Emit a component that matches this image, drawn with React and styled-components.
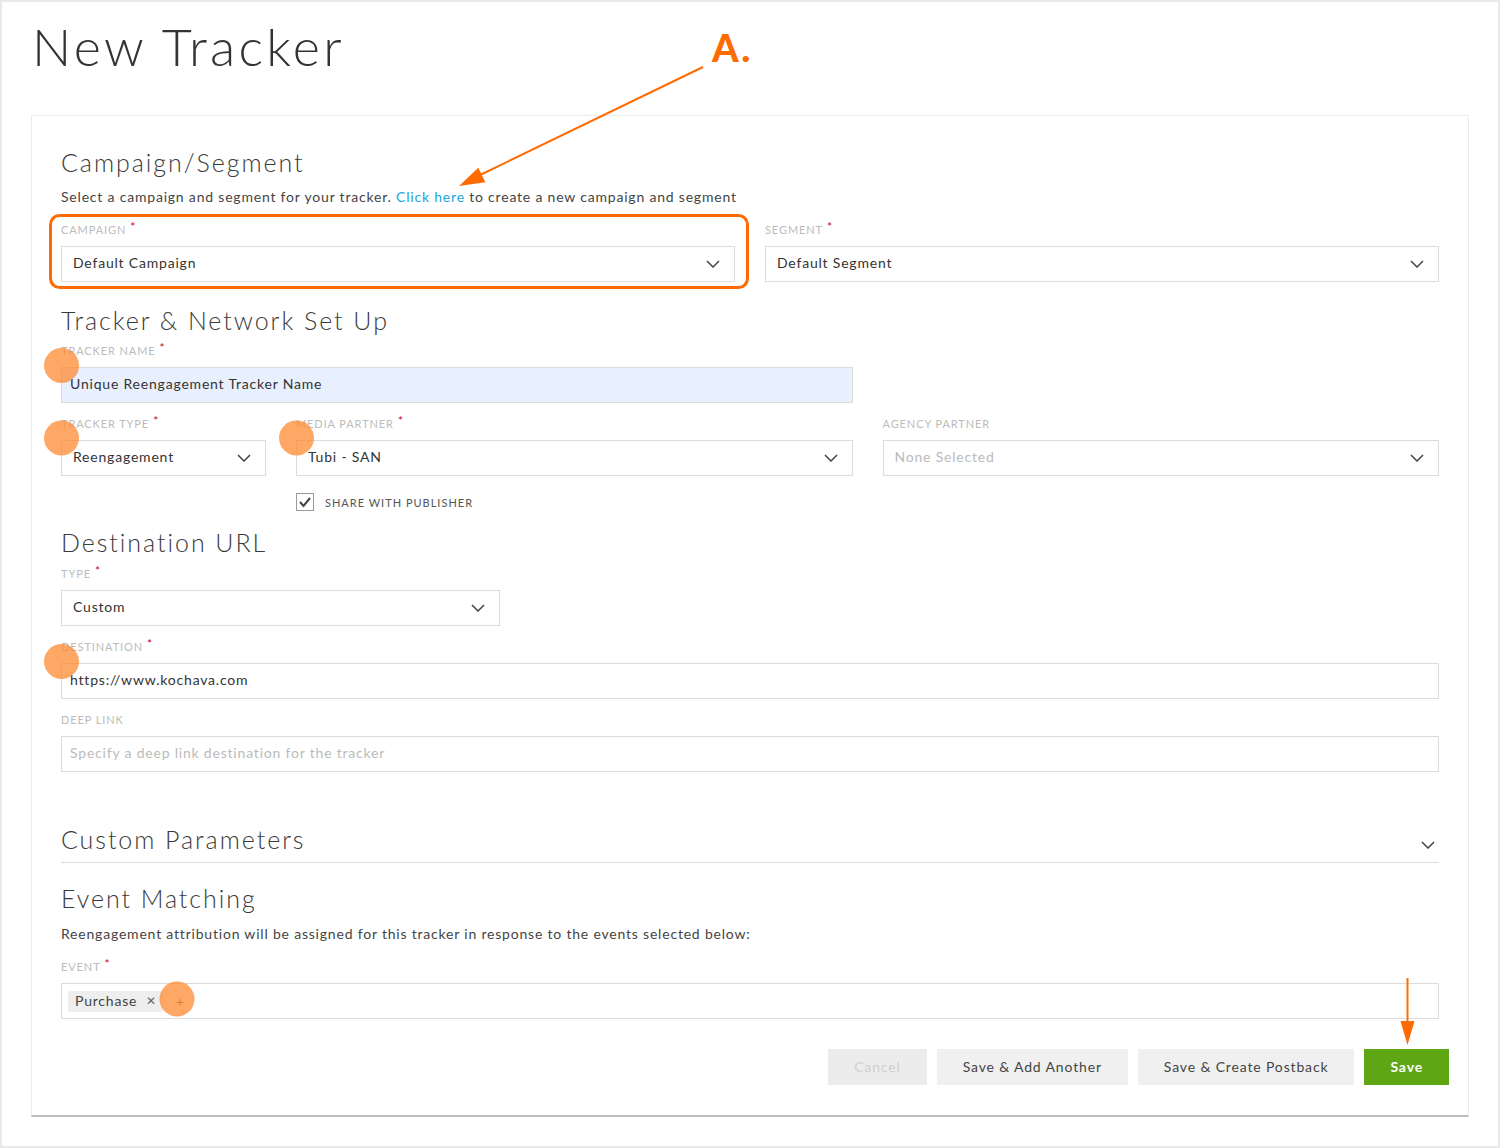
import React from "react";
import styled, { createGlobalStyle } from "styled-components";

const GlobalStyle = createGlobalStyle`
  html, body { margin: 0; padding: 0; background: #fff; }
  body { font-family: Lato, "Liberation Sans", sans-serif; color: #333; }
  *, *::before, *::after { box-sizing: border-box; }
`;

const ORANGE = "#ff6b00";

const Frame = styled.div`
  position: relative;
  width: 1500px;
  height: 1148px;
  border: 2px solid #e9e9e9;
  background: #fff;
  padding: 14px 29px 0;
`;

const PageTitle = styled.h1`
  margin: 0 0 0 1px;
  font-weight: 300;
  font-size: 52px;
  line-height: 60px;
  letter-spacing: 3.3px;
  color: #333;
`;

const Card = styled.section`
  margin-top: 39px;
  border: 1px solid #ececec;
  border-bottom: 2px solid #bdbdbd;
  padding: 31px 29px 30px;
`;

const SectionTitle = styled.h2`
  margin: ${(p) => p.$top ?? 0}px 0 0;
  font-weight: 300;
  font-size: 25px;
  line-height: 30px;
  letter-spacing: 1.95px;
  color: #3a3a3a;
`;

const Description = styled.p`
  margin: ${(p) => p.$top ?? 0}px 0 0;
  font-size: 14px;
  line-height: 20px;
  letter-spacing: 0.8px;
  color: #444;
`;

const Link = styled.a`
  color: #1ba6dc;
  text-decoration: none;
`;

const Grid = styled.div`
  display: grid;
  grid-template-columns: ${(p) => p.$cols};
  column-gap: 30px;
  row-gap: ${(p) => p.$rowGap ?? 13}px;
  margin-top: ${(p) => p.$top ?? 0}px;
`;

const FieldWrap = styled.div`
  grid-column: span ${(p) => p.$span ?? 1};
  display: flex;
  flex-direction: column;
  gap: 8px;
`;

const LabelText = styled.label`
  display: block;
  height: 16px;
  font-size: 11px;
  line-height: 16px;
  letter-spacing: 0.9px;
  text-transform: uppercase;
  color: #bcbcbc;
`;

const Required = styled.span`
  color: #d0021b;
  margin-left: 4px;
  font-size: 12px;
  line-height: 0;
  vertical-align: 3px;
`;

const Control = styled.div`
  height: 36px;
  border: 1px solid #dcdcdc;
  background: ${(p) => (p.$autofill ? "#e8f0fe" : "#fff")};
  display: flex;
  align-items: center;
  padding: 0 14px 3px ${(p) => p.$padLeft ?? 11}px;
  font-size: 14px;
  letter-spacing: 0.8px;
  color: ${(p) => (p.$placeholder ? "#bbb" : "#333")};
`;

const Value = styled.span`
  flex: 1;
  white-space: nowrap;
`;

const ChevronSvg = styled.svg`
  flex: none;
  width: 14px;
  height: 8px;
  margin-top: ${(p) => p.$mt ?? 3}px;
  margin-bottom: ${(p) => p.$mb ?? 0}px;
  margin-right: ${(p) => p.$mr ?? 0}px;
`;

const Chevron = (props) => (
  <ChevronSvg viewBox="0 0 14 8" {...props}>
    <polyline points="1,1 7,7 13,1" fill="none" stroke="#444" strokeWidth="1.5" />
  </ChevronSvg>
);

const Field = ({ label, required, span, children }) => (
  <FieldWrap $span={span}>
    <LabelText>
      {label}
      {required && <Required>*</Required>}
    </LabelText>
    {children}
  </FieldWrap>
);

const Select = ({ value, placeholder }) => (
  <Control $placeholder={!!placeholder}>
    <Value>{value || placeholder}</Value>
    <Chevron />
  </Control>
);

const TextInput = ({ value, placeholder, autofill }) => (
  <Control $padLeft={8} $autofill={autofill} $placeholder={!value}>
    <Value>{value || placeholder}</Value>
  </Control>
);

const CheckRow = styled.label`
  grid-column: 2;
  margin-top: 4px;
  display: flex;
  align-items: center;
  gap: 11px;
  font-size: 11px;
  letter-spacing: 1px;
  text-transform: uppercase;
  color: #555;
  height: 18px;
`;

const CheckBox = styled.span`
  width: 18px;
  height: 18px;
  border: 1px solid #9a9a9a;
  display: flex;
  align-items: center;
  justify-content: center;
  background: #fff;
`;

const Collapsible = styled.div`
  margin-top: 52px;
  display: flex;
  justify-content: space-between;
  align-items: flex-end;
  padding-bottom: 8px;
  border-bottom: 1px solid #ddd;
`;

const TagBox = styled.div`
  height: 36px;
  border: 1px solid #dcdcdc;
  display: flex;
  align-items: center;
  padding-left: 6px;
  gap: 7px;
`;

const Tag = styled.span`
  display: inline-flex;
  align-items: center;
  height: 21px;
  background: #eee;
  border-radius: 2px;
  padding: 0 6px 2px 7px;
  gap: 9px;
  font-size: 14px;
  letter-spacing: 0.8px;
  color: #444;
`;

const TagRemove = styled.span`
  font-size: 12px;
  color: #666;
`;

const AddButton = styled.span`
  font-size: 14px;
  color: #8a5a2a;
  width: 20px;
  text-align: center;
`;

const Actions = styled.div`
  margin: 30px -10px 0 0;
  display: flex;
  justify-content: flex-end;
  gap: 10px;
`;

const Button = styled.button`
  height: 36px;
  padding: 0 ${(p) => p.$pad ?? 26}px 2px;
  border: 0;
  border-radius: 0;
  font-family: inherit;
  font-size: 14px;
  letter-spacing: 0.85px;
  font-weight: ${(p) => (p.$primary ? 700 : 400)};
  background: ${(p) => (p.$primary ? "#5ea614" : p.$disabled ? "#ececec" : "#f0f0f0")};
  color: ${(p) => (p.$primary ? "#fff" : p.$disabled ? "#cfcfcf" : "#444")};
`;

const Overlay = styled.svg`
  position: absolute;
  top: -2px;
  left: -2px;
  width: 1500px;
  height: 1148px;
  pointer-events: none;
`;

const Callout = styled.div`
  position: absolute;
  left: 710px;
  top: 26px;
  font-family: Lato, "Liberation Sans", sans-serif;
  font-weight: 900;
  font-size: 38px;
  line-height: 38px;
  letter-spacing: 2.5px;
  color: ${ORANGE};
`;

const markers = [
  [61.5, 365.5],
  [61.5, 438],
  [296.5, 438],
  [61.5, 661.5],
  [177, 999],
];

export default function App() {
  return (
    <>
      <GlobalStyle />
      <Frame>
        <PageTitle>New Tracker</PageTitle>
        <Card>
          <SectionTitle>Campaign/Segment</SectionTitle>
          <Description $top={10}>
            Select a campaign and segment for your tracker. <Link>Click here</Link> to create a new
            campaign and segment
          </Description>
          <Grid $cols="1fr 1fr" $top={15}>
            <Field label="Campaign" required>
              <Select value="Default Campaign" />
            </Field>
            <Field label="Segment" required>
              <Select value="Default Segment" />
            </Field>
          </Grid>

          <SectionTitle $top={23}>Tracker &amp; Network Set Up</SectionTitle>
          <Grid $cols="205px 1fr 1fr" $top={8}>
            <Field label="Tracker Name" required span={2}>
              <TextInput value="Unique Reengagement Tracker Name" autofill />
            </Field>
            <div />
            <Field label="Tracker Type" required>
              <Select value="Reengagement" />
            </Field>
            <Field label="Media Partner" required>
              <Select value="Tubi - SAN" />
            </Field>
            <Field label="Agency Partner">
              <Select placeholder="None Selected" />
            </Field>
            <CheckRow>
              <CheckBox>
                <svg width="14" height="12" viewBox="0 0 14 12">
                  <polyline points="2,6 5.5,10 12,2" fill="none" stroke="#444" strokeWidth="2" />
                </svg>
              </CheckBox>
              Share with publisher
            </CheckRow>
          </Grid>

          <SectionTitle $top={16}>Destination URL</SectionTitle>
          <Grid $cols="1fr 1fr 1fr" $top={9}>
            <Field label="Type" required>
              <Select value="Custom" />
            </Field>
          </Grid>
          <Grid $cols="1fr" $top={13}>
            <Field label="Destination" required>
              <TextInput value="https://www.kochava.com" />
            </Field>
            <Field label="Deep Link">
              <TextInput placeholder="Specify a deep link destination for the tracker" />
            </Field>
          </Grid>

          <Collapsible>
            <SectionTitle>Custom Parameters</SectionTitle>
            <Chevron $mt={0} $mb={5} $mr={4} />
          </Collapsible>

          <SectionTitle $top={20}>Event Matching</SectionTitle>
          <Description $top={11}>
            Reengagement attribution will be assigned for this tracker in response to the events
            selected below:
          </Description>
          <Grid $cols="1fr" $top={15}>
            <Field label="Event" required>
              <TagBox>
                <Tag>
                  Purchase <TagRemove>✕</TagRemove>
                </Tag>
                <AddButton>+</AddButton>
              </TagBox>
            </Field>
          </Grid>

          <Actions>
            <Button $disabled>Cancel</Button>
            <Button>Save &amp; Add Another</Button>
            <Button>Save &amp; Create Postback</Button>
            <Button $primary>Save</Button>
          </Actions>
        </Card>

        <Callout>A.</Callout>
        <Overlay viewBox="0 0 1500 1148">
          <rect x="50.5" y="215.5" width="697" height="72" rx="9" fill="none" stroke={ORANGE} strokeWidth="3" />
          <line x1="703" y1="67" x2="478" y2="176" stroke={ORANGE} strokeWidth="2" />
          <polygon points="459,186 478.3,167.8 485.3,182.2" fill={ORANGE} />
          <line x1="1407.5" y1="978" x2="1407.5" y2="1022" stroke={ORANGE} strokeWidth="2" />
          <polygon points="1400.5,1021 1414.5,1021 1407.5,1045" fill={ORANGE} />
          {markers.map(([cx, cy]) => (
            <circle key={`${cx}-${cy}`} cx={cx} cy={cy} r="17.5" fill="#ff8a30" fillOpacity="0.75" />
          ))}
        </Overlay>
      </Frame>
    </>
  );
}
